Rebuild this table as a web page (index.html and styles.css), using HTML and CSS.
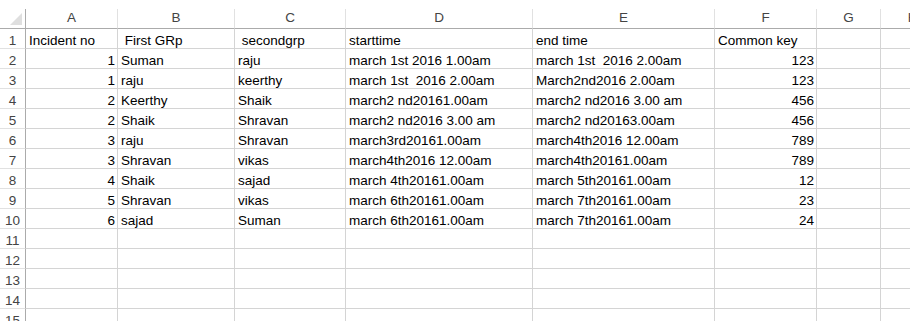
FILE: index.html
```html
<!DOCTYPE html>
<html>
<head>
<meta charset="utf-8">
<link rel="stylesheet" href="styles.css">
</head>
<body>
<div class="sheet">
  <div class="corner"><span class="tri"></span></div>
  <div class="ch">A</div><div class="ch">B</div><div class="ch">C</div><div class="ch">D</div><div class="ch">E</div><div class="ch">F</div><div class="ch">G</div><div class="ch">H</div>

  <div class="rh">1</div><div class="c">Incident no</div><div class="c"> First GRp</div><div class="c"> secondgrp</div><div class="c">starttime</div><div class="c">end time</div><div class="c">Common key</div><div class="c"></div><div class="c"></div>
  <div class="rh">2</div><div class="c n">1</div><div class="c">Suman</div><div class="c">raju</div><div class="c">march 1st 2016 1.00am</div><div class="c">march 1st  2016 2.00am</div><div class="c n">123</div><div class="c"></div><div class="c"></div>
  <div class="rh">3</div><div class="c n">1</div><div class="c">raju</div><div class="c">keerthy</div><div class="c">march 1st  2016 2.00am</div><div class="c">March2nd2016 2.00am</div><div class="c n">123</div><div class="c"></div><div class="c"></div>
  <div class="rh">4</div><div class="c n">2</div><div class="c">Keerthy</div><div class="c">Shaik</div><div class="c">march2 nd20161.00am</div><div class="c">march2 nd2016 3.00 am</div><div class="c n">456</div><div class="c"></div><div class="c"></div>
  <div class="rh">5</div><div class="c n">2</div><div class="c">Shaik</div><div class="c">Shravan</div><div class="c">march2 nd2016 3.00 am</div><div class="c">march2 nd20163.00am</div><div class="c n">456</div><div class="c"></div><div class="c"></div>
  <div class="rh">6</div><div class="c n">3</div><div class="c">raju</div><div class="c">Shravan</div><div class="c">march3rd20161.00am</div><div class="c">march4th2016 12.00am</div><div class="c n">789</div><div class="c"></div><div class="c"></div>
  <div class="rh">7</div><div class="c n">3</div><div class="c">Shravan</div><div class="c">vikas</div><div class="c">march4th2016 12.00am</div><div class="c">march4th20161.00am</div><div class="c n">789</div><div class="c"></div><div class="c"></div>
  <div class="rh">8</div><div class="c n">4</div><div class="c">Shaik</div><div class="c">sajad</div><div class="c">march 4th20161.00am</div><div class="c">march 5th20161.00am</div><div class="c n">12</div><div class="c"></div><div class="c"></div>
  <div class="rh">9</div><div class="c n">5</div><div class="c">Shravan</div><div class="c">vikas</div><div class="c">march 6th20161.00am</div><div class="c">march 7th20161.00am</div><div class="c n">23</div><div class="c"></div><div class="c"></div>
  <div class="rh">10</div><div class="c n">6</div><div class="c">sajad</div><div class="c">Suman</div><div class="c">march 6th20161.00am</div><div class="c">march 7th20161.00am</div><div class="c n">24</div><div class="c"></div><div class="c"></div>
  <div class="rh">11</div><div class="c"></div><div class="c"></div><div class="c"></div><div class="c"></div><div class="c"></div><div class="c"></div><div class="c"></div><div class="c"></div>
  <div class="rh">12</div><div class="c"></div><div class="c"></div><div class="c"></div><div class="c"></div><div class="c"></div><div class="c"></div><div class="c"></div><div class="c"></div>
  <div class="rh">13</div><div class="c"></div><div class="c"></div><div class="c"></div><div class="c"></div><div class="c"></div><div class="c"></div><div class="c"></div><div class="c"></div>
  <div class="rh">14</div><div class="c"></div><div class="c"></div><div class="c"></div><div class="c"></div><div class="c"></div><div class="c"></div><div class="c"></div><div class="c"></div>
  <div class="rh">15</div><div class="c"></div><div class="c"></div><div class="c"></div><div class="c"></div><div class="c"></div><div class="c"></div><div class="c"></div><div class="c"></div>
</div>
</body>
</html>
```
FILE: styles.css
```css
html, body {
  margin: 0;
  padding: 0;
  background: #ffffff;
  overflow: hidden;
}
body {
  width: 910px;
  height: 321px;
}
.sheet {
  margin-top: 9px;
  display: grid;
  grid-template-columns: 26px 92px 117px 111px 187px 182px 102px 64px 64px;
  grid-auto-rows: 20px;
  font-family: "Liberation Sans", Arial, sans-serif;
  font-size: 13.5px;
  color: #000000;
  width: 945px;
}
.corner, .ch, .rh, .c {
  box-sizing: border-box;
  overflow: hidden;
  white-space: pre;
}
.corner {
  position: relative;
  border-right: 1px solid #ababab;
  border-bottom: 1px solid #ababab;
}
.tri {
  position: absolute;
  right: 3px;
  bottom: 3px;
  width: 0;
  height: 0;
  border-left: 12px solid transparent;
  border-bottom: 12px solid #dfdfdf;
}
.ch {
  border-right: 1px solid #e1e1e1;
  border-bottom: 1px solid #ababab;
  text-align: center;
  color: #444444;
  padding-top: 1px;
  line-height: 15px;
}
.rh {
  border-right: 1px solid #ababab;
  border-bottom: 1px solid #e1e1e1;
  text-align: center;
  color: #444444;
  padding-top: 4px;
  line-height: 15px;
}
.c {
  border-right: 1px solid #d4d4d4;
  border-bottom: 1px solid #d4d4d4;
  padding: 4px 3px 0 3px;
  line-height: 15px;
}
.n {
  text-align: right;
  padding-right: 2px;
}
```
